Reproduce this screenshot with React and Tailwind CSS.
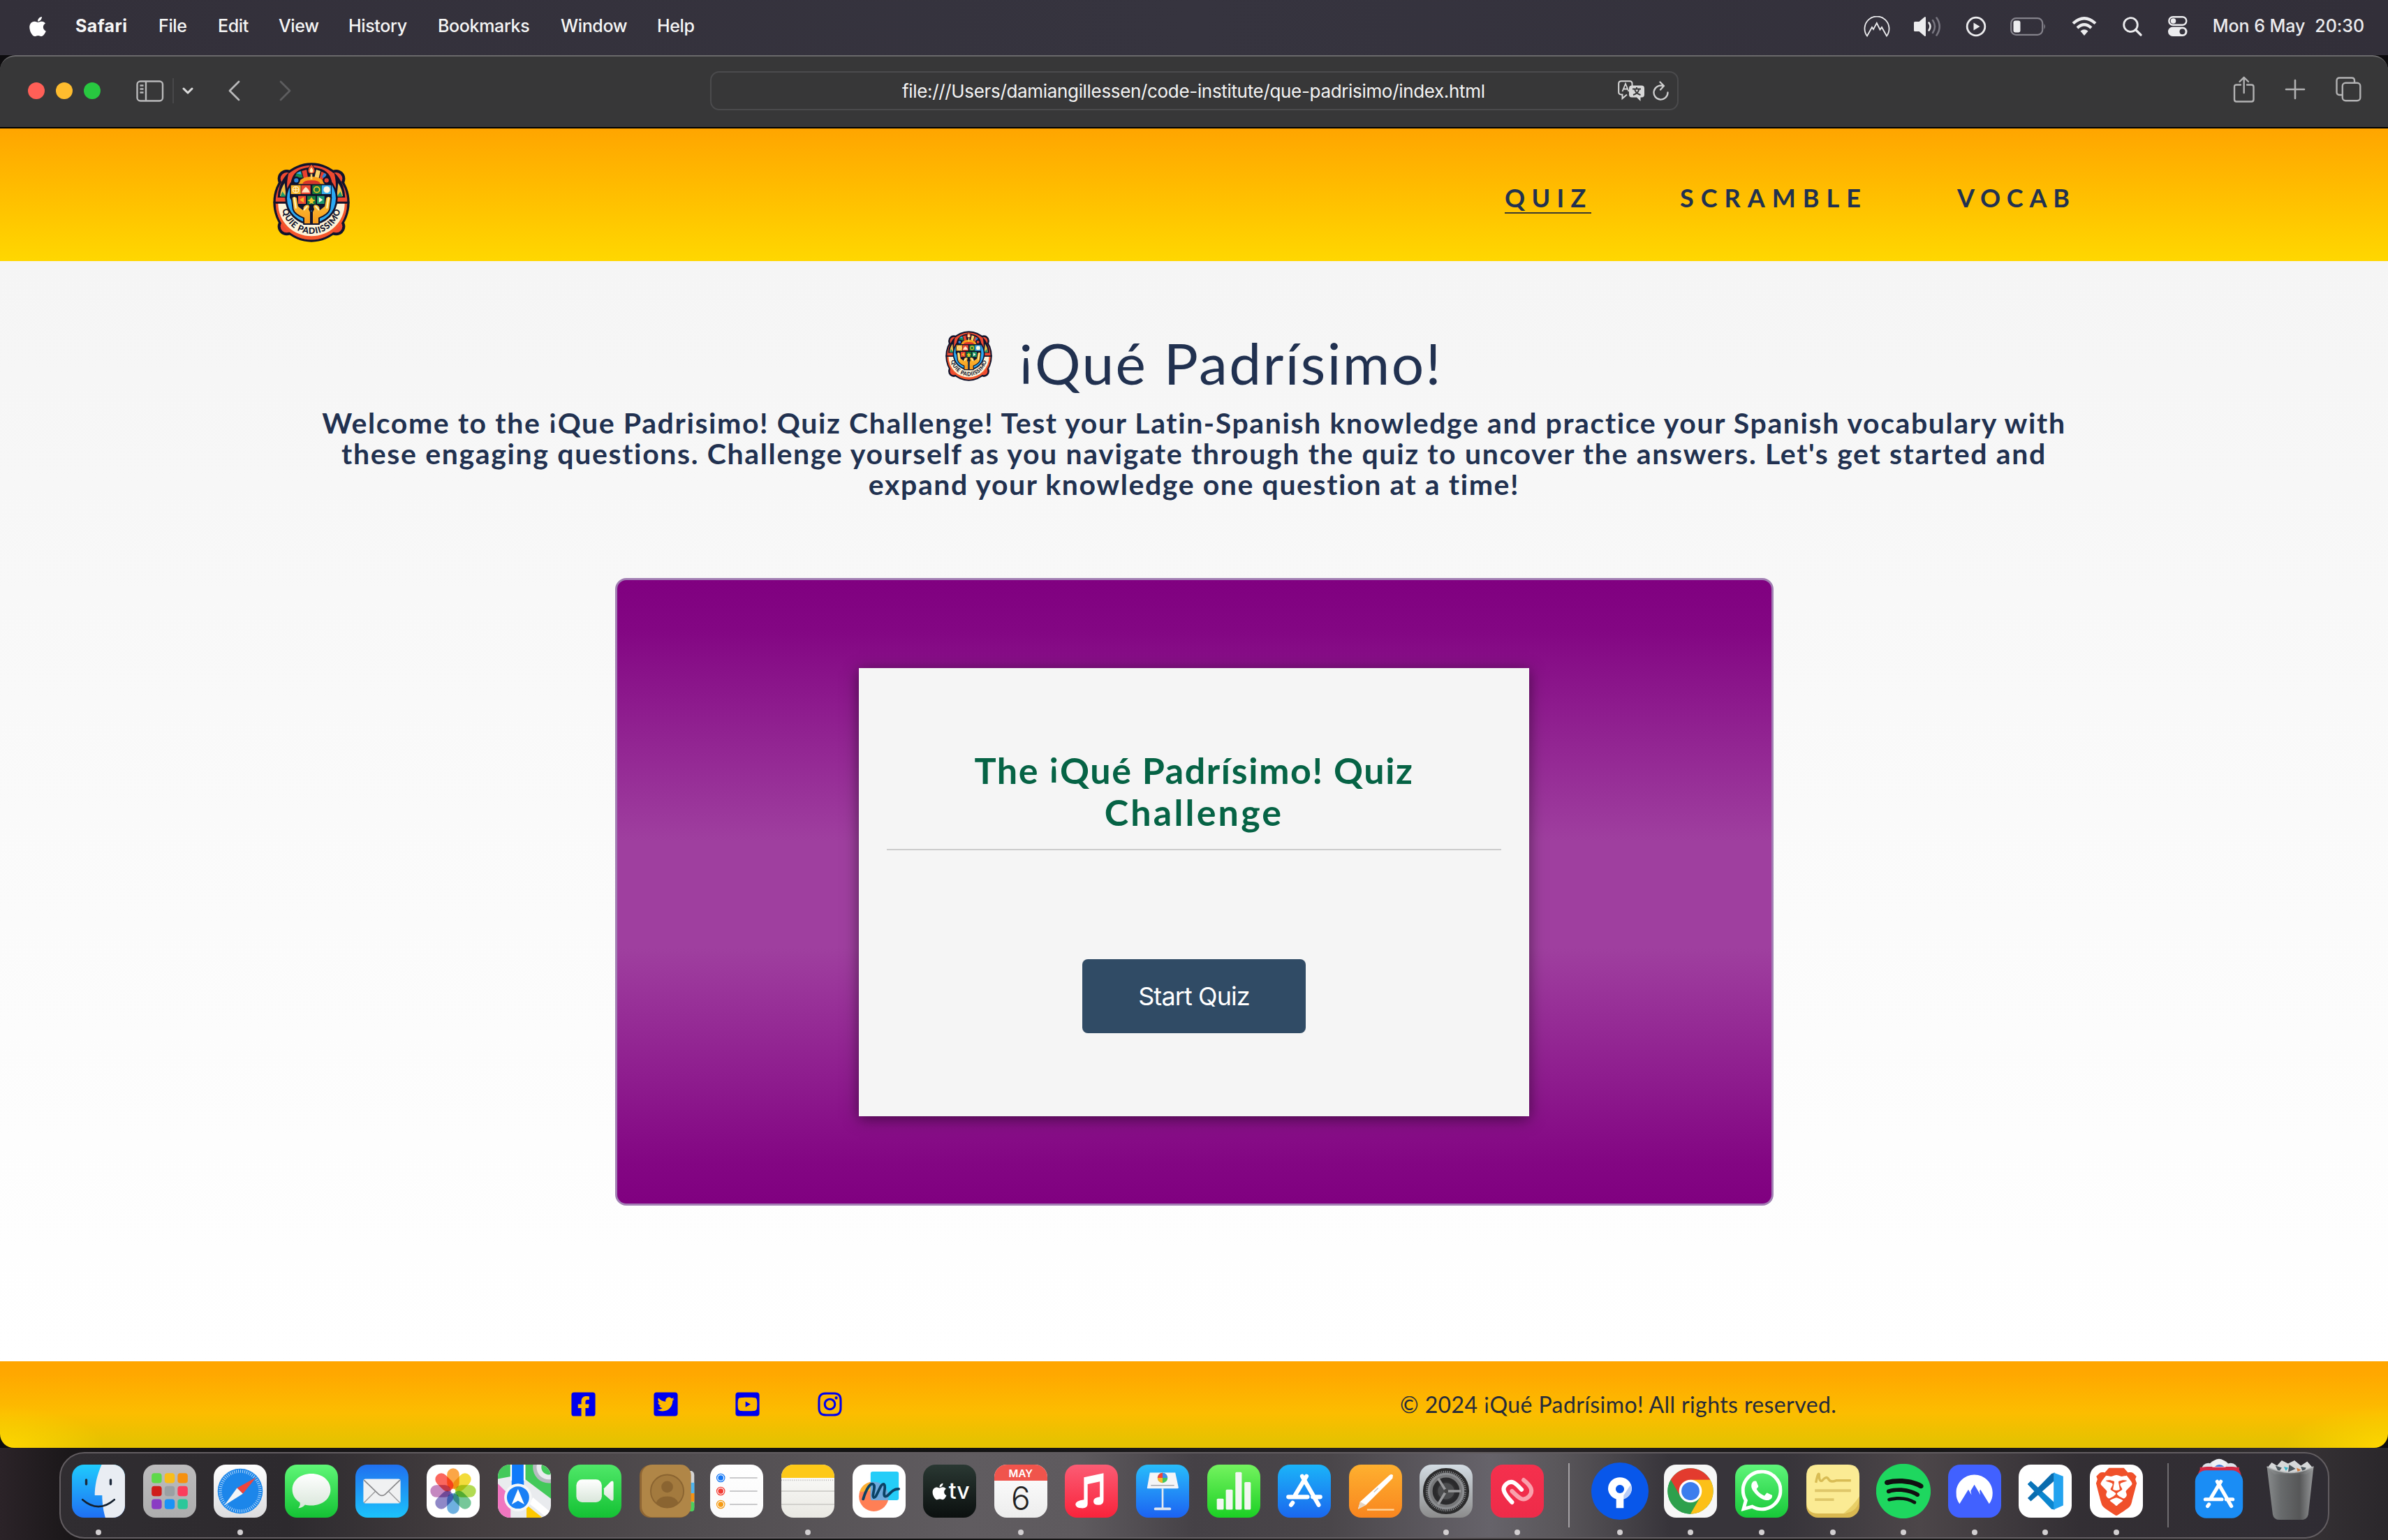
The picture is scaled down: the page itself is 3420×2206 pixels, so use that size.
import { FaApple, FaFacebookSquare, FaTwitterSquare, FaYoutubeSquare, FaInstagram } from "react-icons/fa";
import { SiBrave, SiSpotify, SiNordvpn, SiWhatsapp } from "react-icons/si";

/* ---------- Logo ---------- */
function Logo({ id, className }) {
  return (
    <svg viewBox="0 0 330 342" className={className} preserveAspectRatio="none">
      <defs>
        <path id={id} d="M37 176 A128 130 0 0 0 293 176" />
        <linearGradient id={id + "h"} x1="0" y1="0" x2="0" y2="1">
          <stop offset="0" stopColor="#fdc53a" />
          <stop offset="1" stopColor="#f79a1c" />
        </linearGradient>
      </defs>
      <g fill="#10132c">
        <ellipse cx="165" cy="171" rx="164" ry="170" />
        <circle cx="59" cy="69" r="39" />
        <circle cx="271" cy="69" r="39" />
        <circle cx="59" cy="274" r="39" />
        <circle cx="271" cy="274" r="39" />
      </g>
      <g fill="#ee4a31">
        <ellipse cx="165" cy="171" rx="154" ry="160" />
        <circle cx="59" cy="69" r="27" />
        <circle cx="271" cy="69" r="27" />
        <circle cx="59" cy="274" r="27" />
        <circle cx="271" cy="274" r="27" />
      </g>
      <path d="M12 171 a153 159 0 0 0 306 0z" fill="#10132c" />
      <path d="M12 176 a153 155 0 0 0 306 0z" fill="#f4562b" />
      <path d="M22 176 a143 140 0 0 0 286 0z" fill="#fcf3da" />
      <path d="M2 171H328" stroke="#10132c" strokeWidth="7" />
      <path d="M20 150 q4-70 48-108 q-16 60 0 108z M310 150 q-4-70-48-108 q16 60 0 108z" fill="#10132c" />
      <path d="M30 144 q4-34 20-56 l6 56z M300 144 q-4-34-20-56 l-6 56z" fill="#f2c14a" />
      <path d="M32 146 l8-22 16 22z M298 146 l-8-22-16 22z" fill="#1c9a6b" />
      <circle cx="165" cy="154" r="113" fill="#10132c" />
      <circle cx="165" cy="154" r="105" fill="#2ba8f2" />
      <path d="M76 95 Q80 22 165 20 Q250 22 254 95z" fill="#10132c" />
      <path d="M92 66 l10-22 18-8 8 28z" fill="#1f8a4c" />
      <path d="M100 46 l18-9 4 14z" fill="#2ba8f2" />
      <path d="M124 36 l20-6 6 34 -18 4z" fill="#e9412e" />
      <path d="M186 30 l18 6 -8 32 -18-4z" fill="#fbd36b" />
      <path d="M208 38 l20 10 -14 26 -14-6z" fill="#e9412e" />
      <path d="M220 44 l10 8 -10 16 -10-6z" fill="#2b83d8" />
      <path d="M108 92 q6-30 57-32 q51 2 57 32z" fill="#f9a11b" />
      <path d="M126 92 q4-16 39-16 q35 0 39 16z" fill="#d8342a" />
      <circle cx="100" cy="76" r="13" fill="#2b83d8" stroke="#10132c" strokeWidth="7" />
      <circle cx="230" cy="76" r="13" fill="#e9412e" stroke="#10132c" strokeWidth="7" />
      <path d="M161 46h8v26h-8z" fill="#fbd36b" />
      <path d="M165 6 q20 22 14 36 q-14 12-28 0 q-6-14 14-36z" fill="#f4562b" stroke="#10132c" strokeWidth="3" />
      <path d="M165 20 q10 12 6 20 q-6 6-12 0 q-4-8 6-20z" fill="#fff1b0" />
      <path d="M72 92 H252 V150 Q240 190 165 206 Q90 190 72 150z" fill="#10132c" />
      <rect x="77" y="97" width="42" height="38" fill="#f9b62a" />
      <rect x="121" y="97" width="40" height="38" fill="#ee4a31" />
      <rect x="169" y="97" width="38" height="38" fill="#157a3c" />
      <rect x="209" y="97" width="40" height="38" fill="#37b0ee" />
      <circle cx="98" cy="116" r="13" fill="none" stroke="#fff3cf" strokeWidth="4" />
      <path d="M86 116h24M98 104v24" stroke="#fff3cf" strokeWidth="3" />
      <path d="M123 128 l8-14 10-10 10 10 8 14z" fill="#fbe6c8" />
      <circle cx="188" cy="116" r="12" fill="none" stroke="#f0c62b" strokeWidth="5" />
      <circle cx="231" cy="116" r="14" fill="#fff6df" />
      <g stroke="#10132c" strokeWidth="6" strokeLinejoin="round" fill={`url(#${id}h)`}>
        <path d="M80 150 Q90 138 104 150 L110 186 L128 200 Q124 184 146 178 Q166 180 156 200 L162 212 V264 H132 V238 Q92 222 86 200z" />
        <path d="M250 150 Q240 138 226 150 L220 186 L202 200 Q206 184 184 178 Q164 180 174 200 L168 212 V264 H198 V238 Q238 222 244 200z" />
      </g>
      <path d="M92 152 l6 42 M238 152 l-6 42 M134 202 l12-14 M196 202 l-12-14" stroke="#fff1b0" strokeWidth="7" strokeLinecap="round" fill="none" />
      <rect x="108" y="143" width="33" height="34" fill="#ee4a31" />
      <rect x="147" y="143" width="36" height="36" fill="#157a3c" />
      <rect x="189" y="143" width="32" height="34" fill="#1c9a6b" />
      <path d="M132 148v24l-18-12z" fill="#f9b62a" />
      <path d="M197 148v24l17-12z" fill="#fff6df" />
      <path d="M165 148 l7 10 10 4 -11 6 4 10 -10-4 -10 4 4-10 -11-6 10-4z" fill="#f0c62b" />
      <text fontFamily="Lato, sans-serif" fontWeight="900" fontSize="37" letterSpacing="2.5" fill="#10132c" textAnchor="middle">
        <textPath href={`#${id}`} startOffset="50%">QUIE PADIISSIMO</textPath>
      </text>
    </svg>
  );
}

/* ---------- Menu bar ---------- */
const MENUS = [
  ["File", "w-[85px]"],
  ["Edit", "w-[87px]"],
  ["View", "w-[100px]"],
  ["History", "w-[128px]"],
  ["Bookmarks", "w-[176px]"],
  ["Window", "w-[138px]"],
  ["Help", "w-[80px]"],
];

function MenuBar() {
  return (
    <div className="flex h-[79px] shrink-0 items-center bg-gradient-to-r from-[#33303a] via-[#36343f] to-[#322f39] pb-[4px] text-[25px] font-medium tracking-[-0.35px] text-[#f6f6f6]">
      <FaApple className="ml-[38px] size-[32px] shrink-0 text-white" />
      <span className="ml-[38px] w-[119px] font-bold tracking-[0.4px]">Safari</span>
      {MENUS.map(([m, w]) => (
        <span key={m} className={w}>{m}</span>
      ))}
      <div className="ml-auto flex items-center pr-[34px] text-[#ececee]">
        <svg width="38" height="30" viewBox="0 0 38 30" fill="none" stroke="currentColor" strokeWidth="1.8" strokeLinejoin="miter">
          <path d="M5 28.5 A17.5 17.5 0 1 1 33 28.5 L26 16 L23.5 19.500 L18.800 10 L14 19 L12 16Z" />
        </svg>
        <svg className="ml-[33px]" width="42" height="32" viewBox="0 0 42 32">
          <path d="M1 10.500q0-1.500 1.500-1.500h6L16 2.500q2-1.500 2 1v25q0 2.500-2 1L8.500 23h-6Q1 23 1 21.500z" fill="currentColor" />
          <path d="M22.500 10.500q4 5.500 0 11" fill="none" stroke="currentColor" strokeWidth="2.600" strokeLinecap="round" />
          <path d="M28 7q6 9 0 18M33.500 3.500q8.500 12.500 0 25" fill="none" stroke="#77757f" strokeWidth="2.600" strokeLinecap="round" />
        </svg>
        <svg className="ml-[33px]" width="30" height="30" viewBox="0 0 30 30">
          <circle cx="15" cy="15" r="12.800" fill="none" stroke="currentColor" strokeWidth="2.800" />
          <path d="M11.500 9.500v11l9-5.500z" fill="currentColor" />
        </svg>
        <svg className="ml-[34px]" width="52" height="26" viewBox="0 0 52 26">
          <rect x="1.200" y="1.200" width="45" height="23.600" rx="7" fill="none" stroke="#85838c" strokeWidth="2.200" />
          <rect x="4.500" y="4.500" width="10" height="17" rx="3" fill="currentColor" />
          <path d="M48.500 9q3 4 0 8z" fill="#85838c" />
        </svg>
        <svg className="ml-[36px]" width="36" height="28" viewBox="0 0 36 28" fill="none" stroke="currentColor" strokeWidth="4.200">
          <path d="M2 9.500Q18-5 34 9.500M8 16q10-9.500 20 0" />
          <path d="M12.500 20.500q5.500-4.500 11 0L18 27z" fill="currentColor" stroke="none" />
        </svg>
        <svg className="ml-[37px]" width="28" height="28" viewBox="0 0 28 28" fill="none" stroke="currentColor" strokeWidth="2.800" strokeLinecap="round">
          <circle cx="11.500" cy="11.500" r="9.800" />
          <path d="M18.500 18.500L26 26" strokeWidth="3.200" />
        </svg>
        <svg className="ml-[37px]" width="28" height="29" viewBox="0 0 28 29">
          <rect x="1.300" y="1.300" width="25" height="11.500" rx="5.700" fill="none" stroke="currentColor" strokeWidth="2.400" />
          <circle cx="7.500" cy="7" r="3.800" fill="currentColor" />
          <rect x="0" y="15.500" width="27.500" height="13.500" rx="6.700" fill="currentColor" />
          <circle cx="20.500" cy="22.200" r="4" fill="#34323c" />
        </svg>
        <span className="ml-[36px] tracking-[-0.05px]">Mon 6 May</span>
        <span className="ml-[14px] tracking-[-0.05px]">20:30</span>
      </div>
    </div>
  );
}

/* ---------- Safari toolbar ---------- */
function Toolbar() {
  return (
    <div className="grid h-[105px] shrink-0 grid-cols-[1017px_1387px_1fr] items-center rounded-t-[22px] border-b-2 border-t-2 border-b-black border-t-[#6a696b] bg-[#373738] pb-[3px]">
      <div className="flex items-center pl-[40px] text-[#b9b9ba]">
        <div className="flex gap-[16px]">
          <span className="size-[24px] rounded-full bg-[#ff5f57]" />
          <span className="size-[24px] rounded-full bg-[#febc2e]" />
          <span className="size-[24px] rounded-full bg-[#28c840]" />
        </div>
        <svg className="ml-[51px]" width="40" height="31" viewBox="0 0 40 31" fill="none" stroke="currentColor" strokeWidth="2.400">
          <rect x="1.500" y="1.500" width="36.500" height="28" rx="4.500" />
          <path d="M14 1.500v28M5.500 7.500h5M5.500 12.500h5M5.500 17.500h5" />
        </svg>
        <span className="ml-[12px] h-[36px] w-[2px] bg-[#48484a]" />
        <svg className="ml-[12px]" width="16" height="10" viewBox="0 0 16 10" fill="none" stroke="#dcdcdc" strokeWidth="3" strokeLinecap="round" strokeLinejoin="round"><path d="M2 2l6 6 6-6" /></svg>
        <svg className="ml-[49px]" width="20" height="30" viewBox="0 0 20 30" fill="none" stroke="currentColor" strokeWidth="2.800" strokeLinecap="round" strokeLinejoin="round"><path d="M16 2L3 15l13 13" /></svg>
        <svg className="ml-[53px]" width="20" height="30" viewBox="0 0 20 30" fill="none" stroke="#5d5d5f" strokeWidth="2.800" strokeLinecap="round" strokeLinejoin="round"><path d="M3 2l13 13L3 28" /></svg>
      </div>
      <div className="flex h-[56px] items-center rounded-[13px] border-2 border-[#4b4b4d] pl-[273px] pr-[11px]">
        <span className="whitespace-nowrap text-[26px] tracking-[-0.33px] text-[#f4f4f4]">file:///Users/damiangillessen/code-institute/que-padrisimo/index.html</span>
        <svg className="ml-auto shrink-0" width="39" height="30" viewBox="0 0 39 30">
          <path d="M5 1.200h12q3.500 0 3.500 3.500v4M13 20.500L6.500 26v-5.500H5Q1.200 20.500 1.200 17V4.700Q1.200 1.200 5 1.200" fill="none" stroke="#d8d8d8" strokeWidth="2" />
          <path d="M6.500 16L11 5l4.500 11M8 12.500h6" fill="none" stroke="#d8d8d8" strokeWidth="1.800" />
          <path d="M20 7.500h14q4 0 4 4v9q0 4-4 4h-1.500V30L27 24.500h-7q-4 0-4-4v-9q0-4 4-4z" fill="#d8d8d8" />
          <path d="M21 12.500h12M27 10v2.500M22 21q7-2 8.500-8.500M32.500 21q-7-2-8.500-8.500" fill="none" stroke="#373738" strokeWidth="1.900" />
        </svg>
        <svg className="ml-[11px] shrink-0" width="24" height="28" viewBox="0 0 24 28" fill="none" stroke="#cfcfcf" strokeWidth="2.300" strokeLinecap="round" strokeLinejoin="round">
          <path d="M21.500 16.500A10 10 0 1 1 14.500 7M10.500 1.500L16 7l-5 5.500" />
        </svg>
      </div>
      <div className="flex items-center justify-end pr-[38px] text-[#b2b2b3]">
        <svg className="mb-[4px]" width="32" height="38" viewBox="0 0 32 38" fill="none" stroke="currentColor" strokeWidth="2.400" strokeLinecap="round" strokeLinejoin="round">
          <path d="M11 12.500H5Q2 12.500 2 15.500v18q0 3 3 3h21.500q3 0 3-3v-18q0-3-3-3H20M15.700 24V2M9.500 8l6.200-6.200L22 8" />
        </svg>
        <svg className="mb-[4px] ml-[42px]" width="30" height="30" viewBox="0 0 30 30" fill="none" stroke="currentColor" strokeWidth="2.600" strokeLinecap="round"><path d="M15 2v26M2 15h26" /></svg>
        <svg className="mb-[4px] ml-[43px]" width="37" height="36" viewBox="0 0 37 36" fill="none" stroke="currentColor" strokeWidth="2.400">
          <path d="M9.500 26H5.500Q1.500 26 1.500 22V5.500q0-4 4-4H23q4 0 4 4v3" />
          <rect x="9.800" y="8.800" width="25.500" height="25.500" rx="4.500" />
        </svg>
      </div>
    </div>
  );
}

/* ---------- Web page ---------- */
function Bang() {
  return <span className="relative -top-[0.2em]">¡</span>;
}

function Page() {
  return (
    <div className="flex flex-col font-[Lato,sans-serif] text-[#213150]">
      <header className="flex h-[190px] bg-gradient-to-b from-[#ffa500] to-[#ffd700]">
        <Logo id="logo-lg" className="ml-[391px] mt-[49px] h-[114px] w-[110px]" />
        <nav className="ml-auto flex pr-[446px] pt-[79px] text-[36px] font-bold leading-[40px]">
          <a className="h-[43px] w-[124px] border-b-2 border-[#3a3a30] tracking-[9.3px]">QUIZ</a>
          <a className="ml-[127px] w-[270px] tracking-[10px]">SCRAMBLE</a>
          <a className="ml-[127px] w-[171px] tracking-[8.800px]">VOCAB</a>
        </nav>
      </header>

      <main className="flex h-[1576px] flex-col items-center bg-gradient-to-b from-[#f5f5f5] to-white">
        <div className="mt-[97px] flex h-[96px] w-[712px] items-start">
          <Logo id="logo-sm" className="mt-[3px] h-[72px] w-[70px]" />
          <h1 className="ml-[38px] whitespace-nowrap text-[82px] leading-[96px] tracking-[2.4px]"><Bang />Qué Padrísimo!</h1>
        </div>
        <p className="mt-[17px] whitespace-nowrap text-center text-[41px] font-bold leading-[44px]">
          <span className="block tracking-[1.6px]">Welcome to the <Bang />Que Padrisimo! Quiz Challenge! Test your Latin-Spanish knowledge and practice your Spanish vocabulary with</span>
          <span className="block tracking-[1.65px]">these engaging questions. Challenge yourself as you navigate through the quiz to uncover the answers. Let's get started and</span>
          <span className="block tracking-[1.58px]">expand your knowledge one question at a time!</span>
        </p>

        <section className="mt-[112px] flex h-[899px] w-[1659px] items-center justify-center rounded-[16px] border-[3px] border-[#a27fb3] bg-[linear-gradient(180deg,#800080_0%,#830683_8%,#9f3f9f_42%,#9f3f9f_59%,#830683_93%,#800080_100%)] bg-origin-border">
          <div className="flex h-[642px] w-[960px] flex-col items-center bg-[#f5f5f5] px-[40px] pt-[116px] shadow-[0_4px_20px_rgba(0,0,0,0.5)]">
            <h2 className="w-full border-b-2 border-[#cccccc] pb-[23px] text-center text-[52px] font-bold leading-[60px] text-[#066345]">
              <span className="block tracking-[1.600px]">The <Bang />Qué Padrísimo! Quiz</span>
              <span className="block tracking-[3.200px]">Challenge</span>
            </h2>
            <button className="mt-[156px] h-[106px] w-[320px] rounded-[8px] bg-[#304b65] font-[Inter,sans-serif] text-[36px] tracking-[-0.900px] text-white">Start Quiz</button>
          </div>
        </section>
      </main>

      <footer className="flex h-[124px] items-center rounded-b-[20px] bg-[radial-gradient(ellipse_150px_60px_at_0%_100%,#ffd600_0%,rgba(255,214,0,0)_100%),radial-gradient(ellipse_150px_60px_at_100%_100%,#ffd600_0%,rgba(255,214,0,0)_100%),linear-gradient(180deg,#ffa500_0%,#ffa800_15%,#fcbd00_60%,#e6c200_92%,#e6c200_100%)]">
        <div className="mb-[2px] ml-[816px] flex gap-[78.700px] text-[39px] text-[#0000ee]">
          <FaFacebookSquare />
          <FaTwitterSquare />
          <FaYoutubeSquare />
          <FaInstagram />
        </div>
        <p className="ml-[797px] whitespace-nowrap text-[32px] tracking-[0.400px] text-[#242a3a]">© 2024 <Bang />Qué Padrísimo! All rights reserved.</p>
      </footer>
    </div>
  );
}

/* ---------- Dock ---------- */
function Tile({ id, from, to = from, children }) {
  return (
    <svg viewBox="0 0 100 100" className="size-[76px] overflow-visible">
      <defs>
        <linearGradient id={"g" + id} x1="0" y1="0" x2="0" y2="1">
          <stop offset="0" stopColor={from} />
          <stop offset="1" stopColor={to} />
        </linearGradient>
        <linearGradient id={"w" + id} x1="0" y1="0" x2="0" y2="1">
          <stop offset="0" stopColor="#ffffff" />
          <stop offset="1" stopColor="#d9e6da" />
        </linearGradient>
        <clipPath id={"c" + id}><rect width="100" height="100" rx="23" /></clipPath>
      </defs>
      <g clipPath={`url(#c${id})`}>
        <rect width="100" height="100" fill={`url(#g${id})`} />
        {children}
      </g>
    </svg>
  );
}

const Finder = () => (
  <Tile id="finder" from="#1fcbfd" to="#1f6ff3">
    <path d="M56 0C47 20 43 40 43 58H57C57 75 60 90 63 100H100V0z" fill="#e9edf3" />
    <path d="M27 29v8M73 29v8" stroke="#1d2a3c" strokeWidth="4.500" strokeLinecap="round" />
    <path d="M20 66Q50 92 80 66" fill="none" stroke="#14202e" strokeWidth="3.500" strokeLinecap="round" />
  </Tile>
);

const PAD = ["#5fd94a", "#f8bd1a", "#f6900f", "#cf1d1a", "#9aa0a3", "#fb3d5c", "#8a3cc4", "#1a93f7", "#2cc79a"];
const Launchpad = () => (
  <Tile id="launch" from="#bdbcbd" to="#adadae">
    {PAD.map((c, i) => (
      <rect key={c} x={16 + (i % 3) * 24.5} y={16 + Math.floor(i / 3) * 24.5} width="19" height="19" rx="5" fill={c} />
    ))}
  </Tile>
);

const Safari = () => (
  <Tile id="safari" from="#ffffff" to="#dcdcde">
    <circle cx="50" cy="50" r="42.500" fill="#1c86ea" />
    <circle cx="50" cy="50" r="37.500" fill="none" stroke="#cfe6fb" strokeWidth="6" strokeDasharray="1.100 2.827" />
    <path d="M80 24L44 44L55 55z" fill="#f0443c" />
    <path d="M20 77L44 44L55 55z" fill="#f3f5f7" />
  </Tile>
);

const Messages = () => (
  <Tile id="msg" from="#5ff777" to="#14c234">
    <path d="M50 17C71 17 86 30 86 47S71 77 50 77C45 77 41 76.500 38 75.500C35 79 30 82 25 82C29 78 29 74 28 71C19 66 14 57 14 47C14 30 29 17 50 17z" fill="url(#wmsg)" />
  </Tile>
);

const Mail = () => (
  <Tile id="mail" from="#2070f0" to="#1cc3fb">
    <rect x="15" y="27" width="70" height="46" rx="4" fill="#f0f1f2" />
    <path d="M16 72L38 50M84 72L62 50" stroke="#9b9b9d" strokeWidth="1.800" />
    <path d="M16 29L44 56Q50 61 56 56L84 29" fill="none" stroke="#88888b" strokeWidth="2.200" />
  </Tile>
);

const PETALS = ["#fb9a2c", "#f2d720", "#a8d63a", "#63c08b", "#5aa5dc", "#8078c0", "#bd78b8", "#fb5247"];
const Photos = () => (
  <Tile id="photos" from="#ffffff">
    {PETALS.map((c, i) => (
      <rect key={c} x="38.500" y="7" width="23" height="39" rx="11.500" fill={c} opacity="0.88" transform={`rotate(${i * 45} 50 50)`} className="mix-blend-multiply" />
    ))}
  </Tile>
);

const Maps = () => (
  <Tile id="maps" from="#e9ebee">
    <path d="M0 0H26V22L0 27z" fill="#43c95a" />
    <path d="M52 0H100V64L52 28z" fill="#43c95a" />
    <circle cx="96" cy="5" r="30" fill="#b7bac0" />
    <circle cx="96" cy="5" r="23" fill="#e9ebee" />
    <circle cx="96" cy="5" r="14" fill="#43c95a" />
    <path d="M0 36L24 60V100H0z" fill="#f076c0" />
    <path d="M54 100V76L84 100z" fill="#fdc800" />
    <path d="M66 62L100 90V100H92L60 74z" fill="#ffffff" />
    <rect x="26" width="23" height="48" fill="#0f7bfa" />
    <path d="M25 0v30M50 0v30" stroke="#fff" strokeWidth="3" />
    <circle cx="38" cy="62" r="26" fill="#f6f7f8" />
    <circle cx="38" cy="62" r="21" fill="#1a7ff5" />
    <path d="M38 46L50 75L38 68L26 75z" fill="#fff" />
  </Tile>
);

const FaceTime = () => (
  <Tile id="ft" from="#4fe868" to="#14c234">
    <rect x="15" y="28" width="48" height="43" rx="11" fill="url(#wft)" />
    <path d="M67 45L80 32Q85 29 85 35V64Q85 70 80 67L67 56z" fill="url(#wft)" />
  </Tile>
);

const Contacts = () => (
  <svg viewBox="0 0 100 100" className="size-[76px] overflow-visible">
    <path d="M90 12h8q5 2 5 8v60q0 6-5 8h-8z" fill="#d4d4d4" />
    <rect x="90" y="34" width="13" height="20" fill="#4fb4ef" />
    <rect x="90" y="54" width="13" height="16" fill="#f59314" />
    <rect x="90" y="70" width="13" height="18" rx="4" fill="#4bcf5c" />
    <rect x="0" y="1" width="96" height="99" rx="20" fill="#8f6634" />
    <rect x="4" y="0" width="93" height="99" rx="20" fill="#b08647" />
    <circle cx="52" cy="50" r="31" fill="#a37a3e" stroke="#8a6431" strokeWidth="2.500" />
    <circle cx="52" cy="42" r="11" fill="#8a6431" />
    <path d="M31 72q5-12 21-12t21 12q-9 9-21 9t-21-9z" fill="#8a6431" />
  </svg>
);

const Reminders = () => (
  <Tile id="rem" from="#ffffff" to="#fafafa">
    {["#1477f5", "#f23c34", "#f59a12"].map((c, i) => (
      <g key={c}>
        <circle cx="20" cy={25 + i * 25} r="7.500" fill="none" stroke={c} strokeWidth="1.600" />
        <circle cx="20" cy={25 + i * 25} r="5" fill={c} />
        <path d={`M37 ${25 + i * 25}h52`} stroke="#b9b9bb" strokeWidth="2" />
      </g>
    ))}
  </Tile>
);

const Notes = () => (
  <Tile id="notes" from="#fdfdfc" to="#e9e8e2">
    <rect width="100" height="25" fill="#fdc918" />
    <path d="M0 29.500h100" stroke="#bbb" strokeWidth="2.500" strokeDasharray="1.500 2.500" />
    <path d="M0 50h100M0 75h100" stroke="#c9c8c4" strokeWidth="2" />
  </Tile>
);

const Freeform = () => (
  <Tile id="ff" from="#ffffff">
    <circle cx="40" cy="60" r="28" fill="#ff7f55" />
    <path d="M13 52a28 28 0 0 1 20-19l3 16z" fill="#fbb034" />
    <rect x="34" y="13" width="53" height="54" rx="4" fill="#25cdf8" />
    <path d="M34 33a28 28 0 0 1 33 34H38q-4 0-4-4z" fill="#6fa9dc" />
    <path d="M20 65C26 45 34 34 39 37C45 41 35 60 40 62C46 64 52 34 59 37C65 41 55 58 62 60C68 61 73 45 87 46" fill="none" stroke="#0a4265" strokeWidth="5" strokeLinecap="round" />
  </Tile>
);

const AppleTv = () => (
  <div className="flex size-[76px] items-center justify-center rounded-[18px] bg-gradient-to-b from-[#2a3833] to-[#0b100f] text-white">
    <FaApple className="size-[27px]" />
    <span className="font-[Inter,sans-serif] text-[32px] font-medium leading-none">tv</span>
  </div>
);

const Calendar = () => (
  <div className="flex size-[76px] flex-col overflow-hidden rounded-[18px] bg-gradient-to-b from-white to-[#ededed] text-center font-[Inter,sans-serif]">
    <span className="h-[23px] bg-[#f0544c] text-[15px] font-semibold leading-[26px] text-white">MAY</span>
    <span className="text-[46px] font-light leading-[50px] text-[#222]">6</span>
  </div>
);

const Music = () => (
  <Tile id="music" from="#fb5c74" to="#fa233b">
    <path d="M36 24L73 16V67Q73 76 63 76Q54 76 54 69Q54 62 66 61V32L43 37V74Q43 83 31 82Q21 82 20 75Q20 68 36 66z" fill="#fff" />
  </Tile>
);

const Keynote = () => (
  <Tile id="key" from="#28bdfb" to="#1c62f2">
    <path d="M26 15H74L80 43Q80 45 78 45H22Q20 45 21 43z" fill="#f4f5f7" />
    <path d="M28 38h44v2H28z" fill="#a5aab3" />
    <circle cx="50" cy="25" r="9.500" fill="#43c65c" />
    <path d="M50 25V15.500A9.500 9.500 0 0 1 59.500 25z" fill="#3a8cf0" />
    <path d="M50 25V15.500A9.500 9.500 0 0 0 40.500 25z" fill="#f0443c" />
    <path d="M50 25H40.500A9.500 9.500 0 0 0 50 34.500z" fill="#f9b62a" />
    <path d="M50 45V82" stroke="#e6eaf0" strokeWidth="3.500" />
    <rect x="34" y="81" width="32" height="5" rx="2" fill="#dfe5ef" />
  </Tile>
);

const Numbers = () => (
  <Tile id="num" from="#74f35f" to="#1bd024">
    <g fill="#f3f7f2">
      <rect x="18" y="64" width="13" height="21" rx="2" />
      <rect x="35" y="47" width="13" height="38" rx="2" />
      <rect x="53" y="14" width="12" height="71" rx="2" />
      <rect x="70" y="33" width="12" height="52" rx="2" />
    </g>
  </Tile>
);

const AGlyph = () => (
  <g stroke="#fff" strokeWidth="8" strokeLinecap="round">
    <path d="M54 22L33 57M46 22L77 76M20 61H56M66 61H80M28 72L25 76" />
  </g>
);
const AppStore = () => (
  <Tile id="as" from="#1bb4f9" to="#1a67ee"><AGlyph /></Tile>
);

const Pages = () => (
  <Tile id="pages" from="#feb02f" to="#f9861f">
    <path d="M76 20Q80 17 83 20L82 26L32 76L17 84L21 70z" fill="#fff" />
    <path d="M21 70L17 84L32 76z" fill="#e5d5c3" />
    <path d="M47 52L55 44" stroke="#c9c4bd" strokeWidth="2" />
    <path d="M34 85H85" stroke="#fdd9a4" strokeWidth="3" />
  </Tile>
);

const Settings = () => (
  <Tile id="set" from="#d3dce3" to="#8c8c8c">
    <circle cx="50" cy="50" r="41" fill="#8b8d90" stroke="#2b2b2c" strokeWidth="5" />
    <circle cx="50" cy="50" r="37" fill="none" stroke="#2c2c2d" strokeWidth="5" strokeDasharray="2.200 1.500" />
    <circle cx="50" cy="50" r="28" fill="#2a2a2c" stroke="#77787a" strokeWidth="5" />
    <circle cx="50" cy="50" r="17" fill="#4c4d4f" stroke="#303032" strokeWidth="3" />
    <path d="M50 50H78M50 50L35 26M50 50L35 75" stroke="#98999b" strokeWidth="4.500" />
    <circle cx="50" cy="50" r="4" fill="#444" />
  </Tile>
);

const Authy = () => (
  <Tile id="authy" from="#f5304d" to="#ee2b49">
    <g fill="none" strokeWidth="8" strokeLinecap="round">
      <path d="M62 29C76 40 82 50 71 61C61 70 54 64 40 50" stroke="#f9a0ac" />
      <path d="M40 71C20 50 22 43 30 36C40 28 47 35 58 47" stroke="#fff" />
    </g>
  </Tile>
);

const Sourcetree = () => (
  <svg viewBox="0 0 100 100" className="size-[76px] overflow-visible">
    <circle cx="50" cy="50" r="54" fill="#0857ea" />
    <path d="M50 24a22 21 0 0 1 7 41v17H43V65a22 21 0 0 1 7-41z" fill="#fff" />
    <path d="M72 46a22 20 0 0 1-15 19V58L70 38z" fill="#b9cdf7" />
    <circle cx="50" cy="46" r="8" fill="#0857ea" />
  </svg>
);

const Chrome = () => (
  <Tile id="chrome" from="#f7f7f7">
    <circle cx="50" cy="50" r="43" fill="#2da04c" />
    <path d="M50 50L12.800 28.500A43 43 0 0 1 87.200 28.500z" fill="#e33b2e" />
    <path d="M50 28.500H87.200A43 43 0 0 1 50 93L68.600 60.700z" fill="#fcc018" />
    <path d="M12.800 28.500L31.400 60.700L50 50L50 28.500z" fill="#e33b2e" />
    <path d="M12.800 28.500L31.400 60.700A22 22 0 0 0 50 72L50 93A43 43 0 0 1 12.800 28.500z" fill="#2da04c" />
    <circle cx="50" cy="50" r="21.500" fill="#fff" />
    <circle cx="50" cy="50" r="17" fill="#3b7ded" />
  </Tile>
);

const WhatsApp = () => (
  <Tile id="wa" from="#5ff57a" to="#17c838">
    <SiWhatsapp x="11" y="10" size={78} color="#fff" />
  </Tile>
);

const Stickies = () => (
  <svg viewBox="0 0 100 100" className="size-[76px] overflow-visible">
    <rect x="0" y="10" width="100" height="90" rx="22" fill="#d9b850" />
    <path d="M22 0H78Q100 0 100 22V60Q88 92 70 92H22Q0 92 0 70V22Q0 0 22 0z" fill="#fbeb94" />
    <path d="M70 92Q86 80 100 60Q100 90 70 92z" fill="#e8cf66" />
    <path d="M18 34Q22 14 24 18Q24 34 30 30Q38 20 42 28Q46 34 56 30H84" fill="none" stroke="#d8bc55" strokeWidth="4.500" />
    <path d="M16 49H84M16 66H52" stroke="#dfc76a" strokeWidth="5" />
  </svg>
);

const Spotify = () => (
  <svg viewBox="0 0 100 100" className="size-[76px] overflow-visible">
    <circle cx="50" cy="50" r="46" fill="#101010" />
    <SiSpotify x="-1.500" y="-1.500" size={103} color="#1ed75f" />
  </svg>
);

const Nord = () => (
  <Tile id="nord" from="#4161ff">
    <SiNordvpn x="15" y="12" size={69} color="#fff" />
  </Tile>
);

const VSCode = () => (
  <Tile id="vsc" from="#ffffff">
    <path d="M17 37L23 31L68 72V85L62 84z" fill="#0b86cf" />
    <path d="M17 63L23 69L68 30V15L62 17z" fill="#0a6cae" />
    <path d="M17 37L23 31L45 51L37 58z" fill="#0a74ba" />
    <path d="M66 15L84 22V77L66 85z" fill="#23a3ef" />
  </Tile>
);

const Brave = () => (
  <Tile id="brave" from="#ffffff">
    <SiBrave x="5" y="6" size={90} color="#f0502a" />
  </Tile>
);

const AppStack = () => (
  <svg viewBox="0 0 100 100" className="size-[76px] overflow-visible">
    <circle cx="50" cy="12" r="22" fill="#e9ecf2" />
    <circle cx="30" cy="10" r="13" fill="#dfe3ea" />
    <circle cx="72" cy="10" r="13" fill="#dfe3ea" />
    <path d="M10 22Q12 4 28 4H74Q90 4 92 22z" fill="#d42b45" />
    <circle cx="50" cy="2" r="13" fill="#eef1f6" />
    <path d="M42 4q8-8 18 0z" fill="#3f78d8" />
    <path d="M14 5h74v8H14z" fill="#d42b45" />
    <rect x="5" y="11" width="90" height="90" rx="21" fill="#1a8df5" />
    <g transform="translate(7 13) scale(0.86)"><AGlyph /></g>
  </svg>
);

const Trash = () => (
  <svg viewBox="0 0 100 100" className="size-[76px] overflow-visible">
    <defs>
      <linearGradient id="trash" x1="0" y1="0" x2="1" y2="0">
        <stop offset="0" stopColor="#8d9091" />
        <stop offset="0.3" stopColor="#6b6e6f" />
        <stop offset="0.7" stopColor="#58595a" />
        <stop offset="1" stopColor="#9c9e9f" />
      </linearGradient>
    </defs>
    <path d="M7 6L15 -4L25 2L34 -8L46 -2L58 -8L70 2L82 -6L94 8L80 18H20z" fill="#d6d8d9" />
    <path d="M22 2l12 4-6 8zM48 0l12 8-14 6zM70 4l10 2-6 10z" fill="#4b555b" />
    <path d="M38 4l8 2-4 6z" fill="#2fb4c9" />
    <path d="M62 6l8 4-6 4z" fill="#d37a3a" />
    <path d="M6 4Q50 26 94 4L84 94Q82 104 70 104H30Q19 104 17 94z" fill="url(#trash)" opacity="0.95" />
    <path d="M6 4Q50 26 94 4" fill="none" stroke="#b5b7b8" strokeWidth="2" />
  </svg>
);

const APPS = [
  [Finder, 1], [Launchpad, 0], [Safari, 1], [Messages, 0], [Mail, 0], [Photos, 0], [Maps, 0], [FaceTime, 0],
  [Contacts, 0], [Reminders, 0], [Notes, 1], [Freeform, 0], [AppleTv, 0], [Calendar, 1], [Music, 0],
  [Keynote, 0], [Numbers, 0], [AppStore, 0], [Pages, 0], [Settings, 1], [Authy, 1],
];
const OPEN = [
  [Sourcetree, 1], [Chrome, 1], [WhatsApp, 1], [Stickies, 1], [Spotify, 1], [Nord, 1], [VSCode, 1], [Brave, 1],
];
const RIGHT = [[AppStack, 0], [Trash, 0]];

function Group({ items }) {
  return (
    <div className="flex gap-[25.6px]">
      {items.map(([Icon, open], i) => (
        <div key={i} className="flex w-[76px] flex-col items-center gap-[17px]">
          <Icon />
          {open ? <span className="size-[8px] rounded-full bg-[#d2cfd1]" /> : null}
        </div>
      ))}
    </div>
  );
}

function Dock() {
  return (
    <div className="flex h-[132px] shrink-0 bg-[linear-gradient(90deg,#2b2328_0%,#1a1719_3%,#121212_40%,#2a2628_60%,#151414_80%,#343033_97%,#2a272b_100%)] pl-[85px] pt-[6px]">
      <div className="flex h-[124px] w-[3251px] rounded-[36px] border-2 border-[#625d61] bg-[linear-gradient(90deg,#302d31_0%,#2d2a2e_10%,#443e40_18%,#514d50_28%,#605c60_40%,#5e5a5e_45%,#454146_50%,#4a464a_56%,#66636a_63%,#5a575b_66%,#37343a_71%,#37343a_76%,#4c4649_82%,#332f34_89%,#2f2c33_100%)] pl-[16px] pt-[16px]">
        <Group items={APPS} />
        <span className="ml-[35px] mt-[-2px] h-[92px] w-[2px] bg-[#a5a2a5]" />
        <div className="ml-[34px]"><Group items={OPEN} /></div>
        <span className="ml-[35px] mt-[-2px] h-[92px] w-[2px] bg-[#6f6c70]" />
        <div className="ml-[34px]"><Group items={RIGHT} /></div>
      </div>
    </div>
  );
}

export default function App() {
  return (
    <div className="flex h-[2206px] w-[3420px] flex-col overflow-hidden bg-[#0d0c0e] font-[Inter,sans-serif]">
      <MenuBar />
      <Toolbar />
      <Page />
      <Dock />
    </div>
  );
}
